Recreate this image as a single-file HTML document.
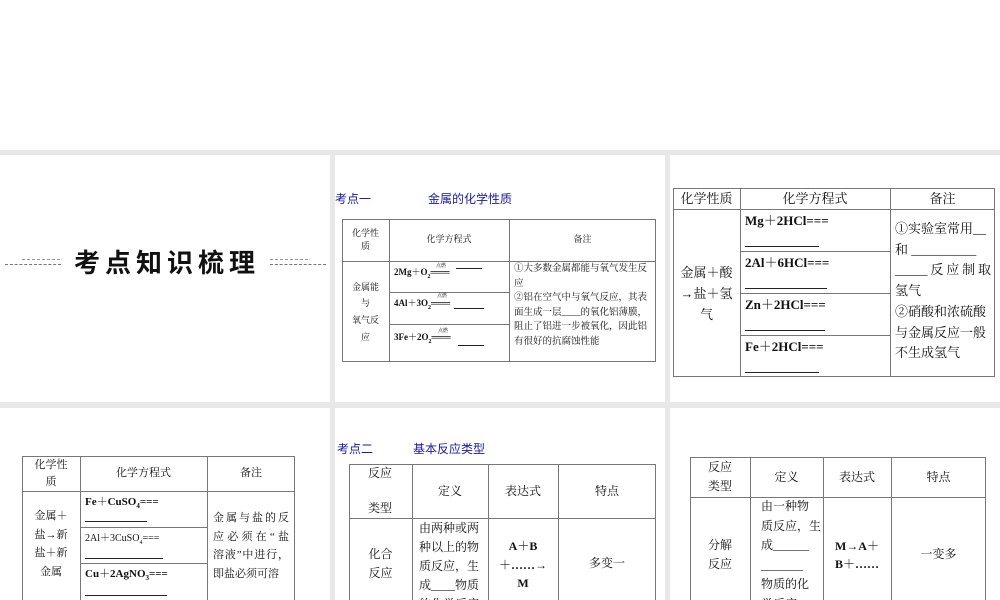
<!DOCTYPE html>
<html><head><meta charset="utf-8"><style>
*{margin:0;padding:0;box-sizing:border-box}
html,body{width:1000px;height:600px;overflow:hidden}
body{background:#fff;position:relative;font-family:"Liberation Serif","Noto Serif CJK SC","Noto Sans CJK SC",serif;color:#111}
#w{position:absolute;left:0;top:0;width:1000px;height:600px;overflow:hidden}
.g{position:absolute;background:#e8e8e8}
.t{position:absolute;white-space:nowrap}
.l{position:absolute;background:#777}
.c{position:absolute;text-align:center;display:flex;align-items:center;justify-content:center;line-height:1.5}
.s{font-family:"Liberation Sans","Noto Sans CJK SC",sans-serif}
.u{position:absolute;border-bottom:1px solid #222}
b{font-weight:bold}
.j{text-align:justify;text-align-last:justify}
.ob{position:absolute;border:1px solid #777;border-bottom:none}
</style></head><body><div id="w">
<div class="g" style="left:0;top:150px;width:1000px;height:5px"></div>
<div class="g" style="left:330px;top:150px;width:5px;height:450px"></div>
<div class="g" style="left:665px;top:150px;width:5px;height:450px"></div>
<div class="g" style="left:0;top:402px;width:1000px;height:6px"></div>

<!-- panel 1 -->
<div class="t s" style="left:74px;top:243px;font-size:26px;font-weight:bold;letter-spacing:5px;color:#111">考点知识梳理</div>
<div class="t" style="left:5px;top:264px;width:56px;border-top:1px dashed #777"></div>
<div class="t" style="left:22px;top:259px;width:38px;border-top:1px dashed #999"></div>
<div class="t" style="left:270px;top:264px;width:56px;border-top:1px dashed #777"></div>
<div class="t" style="left:270px;top:259px;width:38px;border-top:1px dashed #999"></div>

<!-- panel 2 -->
<div class="t s" style="left:335px;top:190px;font-size:12px;color:#1a1aa0">考点一</div>
<div class="t s" style="left:428px;top:190px;font-size:12px;color:#1a1aa0">金属的化学性质</div>
<div style="position:absolute;left:342px;top:219px;width:314px;height:143px;border:1px solid #777"></div>
<div class="l" style="left:389px;top:219px;width:1px;height:143px"></div>
<div class="l" style="left:509px;top:219px;width:1px;height:143px"></div>
<div class="l" style="left:342px;top:261px;width:314px;height:1px"></div>
<div class="l" style="left:389px;top:292px;width:120px;height:1px"></div>
<div class="l" style="left:389px;top:324px;width:120px;height:1px"></div>
<div class="c" style="left:342px;top:219px;width:47px;height:42px;font-size:9px">化学性<br>质</div>
<div class="c" style="left:389px;top:219px;width:120px;height:42px;font-size:9px">化学方程式</div>
<div class="c" style="left:509px;top:219px;width:147px;height:42px;font-size:9px">备注</div>
<div class="c" style="left:342px;top:262px;width:47px;height:100px;font-size:9px;line-height:1.85">金属能<br>与<br>氧气反<br>应</div>
<div class="t" style="left:394px;top:265px;font-size:9px"><b>2Mg＋O<sub style="font-size:6px">2</sub>═══</b></div>
<div class="t" style="left:436px;top:262px;font-size:5px">点燃</div>
<div class="u" style="left:456px;top:268px;width:26px"></div>
<div class="t" style="left:394px;top:296px;font-size:9px"><b>4Al＋3O<sub style="font-size:6px">2</sub>═══</b></div>
<div class="t" style="left:437px;top:292px;font-size:5px">点燃</div>
<div class="u" style="left:454px;top:308px;width:30px"></div>
<div class="t" style="left:394px;top:330px;font-size:9px"><b>3Fe＋2O<sub style="font-size:6px">2</sub>═══</b></div>
<div class="t" style="left:438px;top:327px;font-size:5px">点燃</div>
<div class="u" style="left:458px;top:345px;width:26px"></div>
<div class="t" style="left:514px;top:262px;font-size:9.5px;line-height:14.5px">①大多数金属都能与氧气发生反<br>应<br>②铝在空气中与氧气反应，其表<br>面生成一层____的氧化铝薄膜，<br>阻止了铝进一步被氧化，因此铝<br>有很好的抗腐蚀性能</div>

<!-- panel 3 -->
<div style="position:absolute;left:673px;top:188px;width:322px;height:189px;border:1px solid #777"></div>
<div class="l" style="left:740px;top:188px;width:1px;height:189px"></div>
<div class="l" style="left:890px;top:188px;width:1px;height:189px"></div>
<div class="l" style="left:673px;top:209px;width:322px;height:1px"></div>
<div class="l" style="left:740px;top:251px;width:150px;height:1px"></div>
<div class="l" style="left:740px;top:293px;width:150px;height:1px"></div>
<div class="l" style="left:740px;top:335px;width:150px;height:1px"></div>
<div class="c" style="left:673px;top:188px;width:67px;height:21px;font-size:13px">化学性质</div>
<div class="c" style="left:740px;top:188px;width:150px;height:21px;font-size:13px">化学方程式</div>
<div class="c" style="left:890px;top:188px;width:105px;height:21px;font-size:13px">备注</div>
<div class="c" style="left:673px;top:210px;width:67px;height:167px;font-size:13px;line-height:21px">金属＋酸<br>→盐＋氢<br>气</div>
<div class="t" style="left:745px;top:210px;font-size:13px"><b>Mg＋2HCl===</b></div>
<div class="u" style="left:745px;top:246px;width:74px"></div>
<div class="t" style="left:745px;top:252px;font-size:13px"><b>2Al＋6HCl===</b></div>
<div class="u" style="left:745px;top:288px;width:82px"></div>
<div class="t" style="left:745px;top:294px;font-size:13px"><b>Zn＋2HCl===</b></div>
<div class="u" style="left:745px;top:330px;width:80px"></div>
<div class="t" style="left:745px;top:336px;font-size:13px"><b>Fe＋2HCl===</b></div>
<div class="u" style="left:745px;top:372px;width:74px"></div>
<div class="t" style="left:895px;top:219px;width:96px;font-size:13px;line-height:20.7px">
<div>①实验室常用__</div><div>和 __________</div><div class="j">_____反应制取</div><div>氢气</div><div>②硝酸和浓硫酸</div><div>与金属反应一般</div><div>不生成氢气</div></div>

<!-- panel 4 -->
<div class="ob" style="left:22px;top:456px;width:273px;height:144px"></div>
<div class="l" style="left:80px;top:456px;width:1px;height:144px"></div>
<div class="l" style="left:207px;top:456px;width:1px;height:144px"></div>
<div class="l" style="left:22px;top:491px;width:273px;height:1px"></div>
<div class="l" style="left:80px;top:527px;width:127px;height:1px"></div>
<div class="l" style="left:80px;top:563px;width:127px;height:1px"></div>
<div class="c" style="left:22px;top:456px;width:58px;height:35px;font-size:11px;line-height:17px">化学性<br>质</div>
<div class="c" style="left:80px;top:456px;width:127px;height:35px;font-size:11px">化学方程式</div>
<div class="c" style="left:207px;top:456px;width:88px;height:35px;font-size:11px">备注</div>
<div class="c" style="left:22px;top:506px;width:58px;height:76px;font-size:11px;line-height:18.5px">金属＋<br>盐→新<br>盐＋新<br>金属</div>
<div class="t" style="left:85px;top:493px;font-size:11px"><b>Fe＋CuSO<sub style="font-size:7px">4</sub>===</b></div>
<div class="u" style="left:85px;top:521px;width:62px"></div>
<div class="t" style="left:85px;top:529px;font-size:10px">2Al＋3CuSO<sub style="font-size:6px">4</sub>===</div>
<div class="u" style="left:85px;top:558px;width:78px"></div>
<div class="t" style="left:85px;top:565px;font-size:11px"><b>Cu＋2AgNO<sub style="font-size:7px">3</sub>===</b></div>
<div class="u" style="left:85px;top:595px;width:82px"></div>
<div class="t" style="left:213px;top:509px;width:76px;font-size:11px;line-height:18.5px">
<div class="j">金属与盐的反</div><div class="j">应必须在“盐</div><div class="j">溶液”中进行，</div><div>即盐必须可溶</div></div>

<!-- panel 5 -->
<div class="t s" style="left:337px;top:440px;font-size:12px;color:#1a1aa0">考点二</div>
<div class="t s" style="left:413px;top:440px;font-size:12px;color:#1a1aa0">基本反应类型</div>
<div class="ob" style="left:349px;top:464px;width:307px;height:136px"></div>
<div class="l" style="left:412px;top:464px;width:1px;height:136px"></div>
<div class="l" style="left:488px;top:464px;width:1px;height:136px"></div>
<div class="l" style="left:558px;top:464px;width:1px;height:136px"></div>
<div class="l" style="left:349px;top:518px;width:307px;height:1px"></div>
<div class="t" style="left:368px;top:464px;font-size:12px">反应</div>
<div class="t" style="left:368px;top:499px;font-size:12px">类型</div>
<div class="c" style="left:412px;top:464px;width:76px;height:54px;font-size:12px">定义</div>
<div class="c" style="left:488px;top:464px;width:70px;height:54px;font-size:12px">表达式</div>
<div class="c" style="left:558px;top:464px;width:98px;height:54px;font-size:12px">特点</div>
<div class="c" style="left:349px;top:544px;width:63px;height:40px;font-size:12px;line-height:19px">化合<br>反应</div>
<div class="t" style="left:419px;top:519px;height:81px;overflow:hidden;font-size:12px;line-height:19px">由两种或两<br>种以上的物<br>质反应，生<br>成____物质<br>的化学反应</div>
<div class="c" style="left:488px;top:537px;width:70px;height:56px;font-size:12px;line-height:18.5px"><b>A＋B<br>＋……→<br>M</b></div>
<div class="c" style="left:558px;top:553px;width:98px;height:20px;font-size:12px">多变一</div>

<!-- panel 6 -->
<div class="ob" style="left:690px;top:457px;width:296px;height:143px"></div>
<div class="l" style="left:750px;top:457px;width:1px;height:143px"></div>
<div class="l" style="left:823px;top:457px;width:1px;height:143px"></div>
<div class="l" style="left:891px;top:457px;width:1px;height:143px"></div>
<div class="l" style="left:690px;top:497px;width:296px;height:1px"></div>
<div class="c" style="left:690px;top:457px;width:60px;height:40px;font-size:12px;line-height:19px">反应<br>类型</div>
<div class="c" style="left:750px;top:457px;width:73px;height:40px;font-size:12px">定义</div>
<div class="c" style="left:823px;top:457px;width:68px;height:40px;font-size:12px">表达式</div>
<div class="c" style="left:891px;top:457px;width:95px;height:40px;font-size:12px">特点</div>
<div class="c" style="left:690px;top:535px;width:60px;height:40px;font-size:12px;line-height:19px">分解<br>反应</div>
<div class="t" style="left:761px;top:497px;height:103px;overflow:hidden;font-size:12px;line-height:19.5px">由一种物<br>质反应，生<br>成______<br>_______<br>物质的化<br>学反应</div>
<div class="c" style="left:823px;top:535px;width:68px;height:40px;font-size:12px;line-height:18px"><b>M→A＋<br>B＋……</b></div>
<div class="c" style="left:891px;top:544px;width:95px;height:20px;font-size:12px">一变多</div>
</div></body></html>
